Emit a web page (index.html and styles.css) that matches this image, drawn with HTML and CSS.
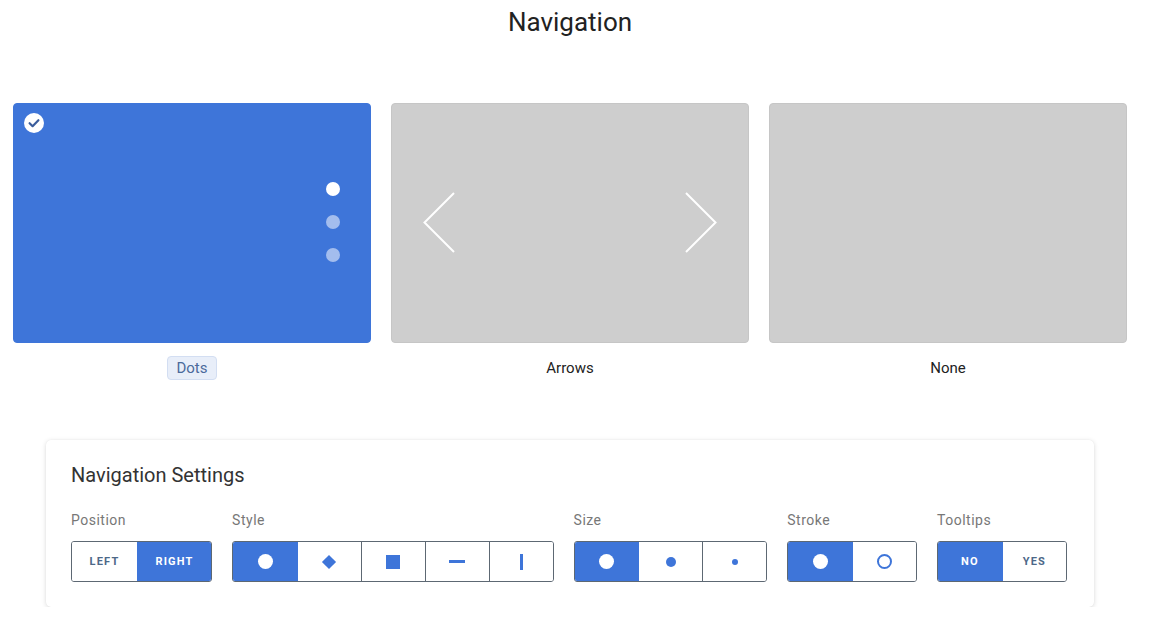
FILE: index.html
```html
<!DOCTYPE html>
<html>
<head>
<meta charset="utf-8">
<title>Navigation</title>
<link rel="stylesheet" href="styles.css">
</head>
<body>
<div class="page">
  <h1 class="title">Navigation</h1>

  <div class="choices">
    <div class="choice">
      <div class="preview preview-on">
        <span class="check">
          <svg width="20" height="20" viewBox="0 0 20 20"><circle cx="10" cy="10" r="10" fill="#fff"/><path d="M5.6 10.2l3 3 5.8-6" fill="none" stroke="#3b5d9c" stroke-width="2.2" stroke-linecap="round" stroke-linejoin="round"/></svg>
        </span>
        <div class="dots">
          <span class="dot dot-on"></span>
          <span class="dot"></span>
          <span class="dot"></span>
        </div>
      </div>
      <span class="name name-on">Dots</span>
    </div>
    <div class="choice">
      <div class="preview preview-arrows">
        <svg width="32" height="62" viewBox="0 0 32 62"><path d="M31 1L1.5 30.5L31 60" fill="none" stroke="#fff" stroke-width="2"/></svg>
        <svg width="32" height="62" viewBox="0 0 32 62"><path d="M1 1L30.5 30.5L1 60" fill="none" stroke="#fff" stroke-width="2"/></svg>
      </div>
      <span class="name">Arrows</span>
    </div>
    <div class="choice">
      <div class="preview"></div>
      <span class="name">None</span>
    </div>
  </div>

  <div class="panel">
    <h2 class="panel-title">Navigation Settings</h2>
    <div class="fields">
      <div class="field">
        <div class="label">Position</div>
        <div class="group">
          <button class="btn btn-text">Left</button>
          <button class="btn btn-text active">Right</button>
        </div>
      </div>
      <div class="field">
        <div class="label">Style</div>
        <div class="group">
          <button class="btn active"><span class="ico circle"></span></button>
          <button class="btn"><span class="ico diamond"></span></button>
          <button class="btn"><span class="ico square"></span></button>
          <button class="btn"><span class="ico dash"></span></button>
          <button class="btn"><span class="ico bar"></span></button>
        </div>
      </div>
      <div class="field">
        <div class="label">Size</div>
        <div class="group">
          <button class="btn active"><span class="ico circle"></span></button>
          <button class="btn"><span class="ico circle mid"></span></button>
          <button class="btn"><span class="ico circle small"></span></button>
        </div>
      </div>
      <div class="field">
        <div class="label">Stroke</div>
        <div class="group">
          <button class="btn active"><span class="ico circle"></span></button>
          <button class="btn"><span class="ico ring"></span></button>
        </div>
      </div>
      <div class="field">
        <div class="label">Tooltips</div>
        <div class="group">
          <button class="btn btn-text active">No</button>
          <button class="btn btn-text">Yes</button>
        </div>
      </div>
    </div>
  </div>
</div>
</body>
</html>
```

FILE: styles.css
```css
html, body { margin:0; padding:0; background:#fff; font-family:Roboto, "Liberation Sans", sans-serif; color:#222; }
.page { width:1140px; padding-top:6px; }
.title { margin:0; font-size:26px; line-height:32px; font-weight:400; text-align:center; color:#222; }

.choices { display:flex; gap:20px; padding-left:13px; margin-top:65px; }
.choice { width:358px; display:flex; flex-direction:column; align-items:center; }
.preview { width:358px; height:240px; box-sizing:border-box; border-radius:4px; background:#cecece; border:1px solid #c6c6c6; position:relative; }
.preview-on { background:#3e75d9; border-color:#3e75d9; }
.preview-arrows { display:flex; justify-content:space-between; align-items:center; padding:0 31px 0 31px; }
.check { position:absolute; left:10px; top:9px; width:20px; height:20px; }
.check svg { display:block; }
.dots { position:absolute; right:30px; top:78px; display:flex; flex-direction:column; gap:19px; }
.dot { width:14px; height:14px; border-radius:50%; background:#a3bdee; }
.dot-on { background:#fff; }
.name { margin-top:13px; font-size:15px; line-height:22px; padding:0 8px; border:1px solid transparent; border-radius:4px; color:#222; }
.name-on { background:#e8eef9; border-color:#d3def2; color:#4b6a9c; }

.panel { margin:60px 0 0 46px; width:1048px; box-sizing:border-box; padding:21px 25px 25px; background:#fff; border-radius:5px; box-shadow:0 1px 5px rgba(0,0,0,0.14), 0 0 1px rgba(0,0,0,0.08); }
.panel-title { margin:0; font-size:20px; line-height:28px; font-weight:400; color:#333; }
.fields { display:flex; gap:20px; margin-top:23px; }
.label { font-size:14px; line-height:16px; color:#777; letter-spacing:0.5px; margin-bottom:13px; }
.group { display:flex; border:1px solid #5d6873; border-radius:3px; overflow:hidden; height:41px; box-sizing:border-box; }
.btn { min-width:63.9px; height:39px; box-sizing:border-box; border:0; border-left:1px solid #5d6873; background:#fff; padding:0 17.5px; display:flex; align-items:center; justify-content:center; font-family:inherit; cursor:pointer; }
.btn:first-child { border-left:0; }
.btn.active { background:#3e75d9; border-left-color:#3e75d9; }
.btn.active + .btn { border-left-color:#3e75d9; }
.btn-text { font-size:11px; font-weight:700; letter-spacing:1.2px; text-transform:uppercase; color:#4d6888; }
.btn-text.active { color:#fff; }

.ico { display:block; background:#3e75d9; }
.active .ico { background:#fff; }
.circle { width:15px; height:15px; border-radius:50%; }
.circle.mid { width:10px; height:10px; }
.circle.small { width:6px; height:6px; }
.diamond { width:10px; height:10px; transform:rotate(45deg); }
.square { width:14px; height:14px; }
.dash { width:16px; height:3px; }
.bar { width:3px; height:16px; }
.ring { width:11px; height:11px; border-radius:50%; border:2px solid #3e75d9; background:#fff; }
```
